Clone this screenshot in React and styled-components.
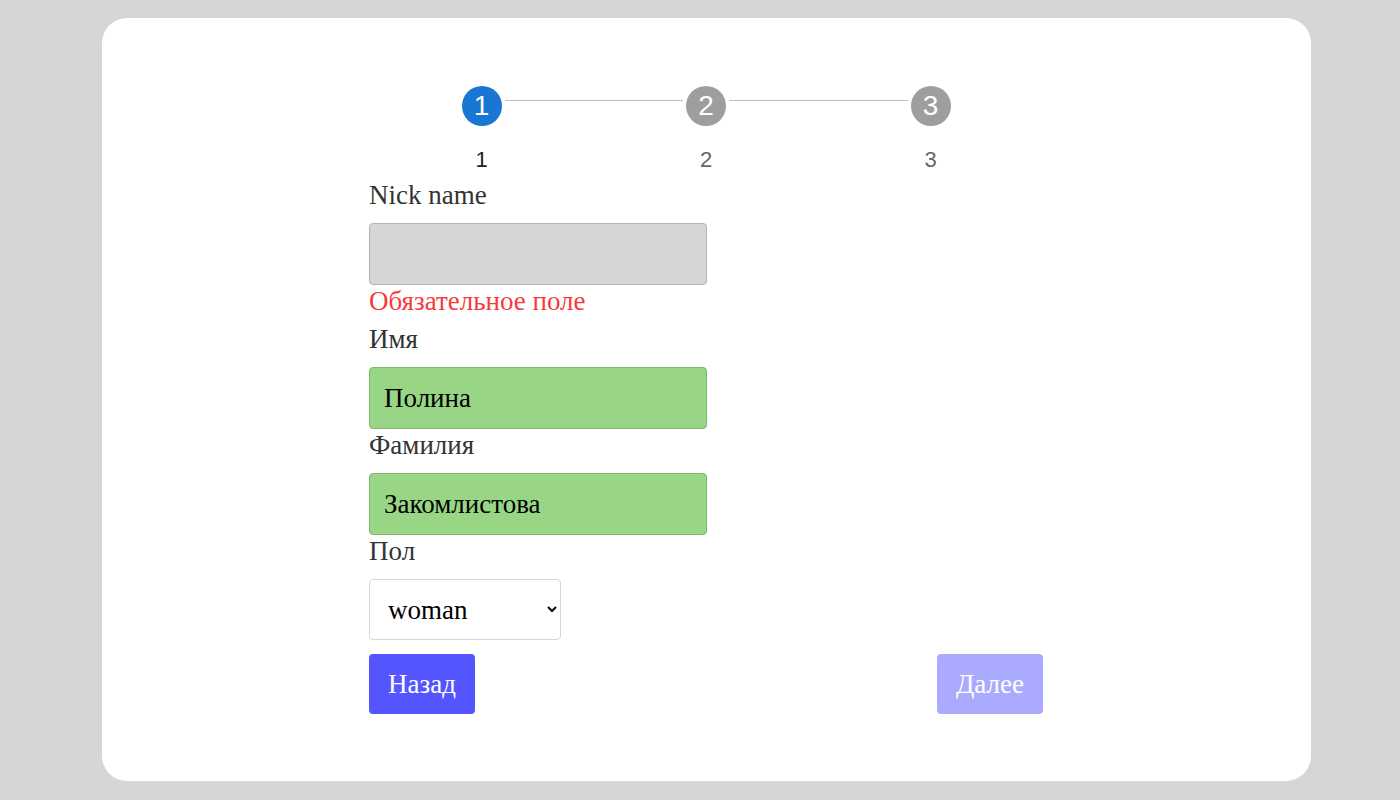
import React, { useState } from 'react';
import styled, { createGlobalStyle } from 'styled-components';

const GlobalStyle = createGlobalStyle`
  html, body {
    margin: 0;
    padding: 0;
    background: #d6d6d6;
  }
  body {
    font-family: "Liberation Serif", "Times New Roman", serif;
  }
`;

const Page = styled.div`
  padding: 18px 89px 19px 102px;
`;

const Card = styled.div`
  background: #fff;
  border-radius: 25px;
  padding: 68px 0 67px;
`;

const Content = styled.div`
  width: 674px;
  margin-left: 267px;
  display: flex;
  flex-direction: column;
`;

const Stepper = styled.div`
  align-self: center;
  display: grid;
  grid-template-columns: 40px 1fr 40px 1fr 40px;
  width: 489px;
  row-gap: 21px;
  margin-bottom: 7px;
  font-family: "Liberation Sans", Arial, sans-serif;
`;

const StepCircle = styled.div`
  width: 40px;
  height: 40px;
  border-radius: 50%;
  background: ${({ $active }) => ($active ? '#1976d2' : '#9e9e9e')};
  color: #fff;
  font-size: 28px;
  display: flex;
  align-items: center;
  justify-content: center;
`;

const Connector = styled.div`
  align-self: start;
  margin: 14px 3px 0;
  border-top: 1px solid #bdbdbd;
`;

const StepLabel = styled.div`
  justify-self: center;
  font-size: 22px;
  line-height: 25px;
  color: ${({ $active }) => ($active ? '#1f1f1f' : '#666')};
  grid-column: ${({ $col }) => $col};
`;

const Label = styled.label`
  display: block;
  font-size: 27px;
  line-height: 31px;
  color: #333;
  margin: 1px 0 12px;
`;

const Input = styled.input`
  box-sizing: border-box;
  width: 338px;
  height: 62px;
  padding: 0 14px;
  border-radius: 4px;
  border: 1px solid ${({ $valid }) => ($valid ? '#7db66d' : '#b3b3b3')};
  background: ${({ $valid }) => ($valid ? '#98d686' : '#d6d6d6')};
  font-family: inherit;
  font-size: 27px;
  color: #000;
  outline: none;
`;

const Error = styled.div`
  font-size: 27px;
  line-height: 31px;
  color: #f53b3b;
  margin: 1px 0 6px;
`;

const Select = styled.select`
  box-sizing: border-box;
  width: 192px;
  height: 61px;
  padding: 0 15px 0 14px;
  border-radius: 4px;
  border: 1px solid #d6d6d6;
  background: #fff;
  font-family: inherit;
  font-size: 27px;
  color: #000;
  outline: none;
`;

const Buttons = styled.div`
  display: flex;
  justify-content: space-between;
  margin-top: 14px;
`;

const Button = styled.button`
  height: 60px;
  padding: 0 19px;
  border: none;
  border-radius: 4px;
  background: ${({ disabled }) => (disabled ? '#aaaaff' : '#5555ff')};
  color: #fff;
  font-family: inherit;
  font-size: 27px;
  cursor: ${({ disabled }) => (disabled ? 'default' : 'pointer')};
`;

const steps = [1, 2, 3];

export default function App() {
  const [current] = useState(1);
  const [form, setForm] = useState({
    nick: '',
    name: 'Полина',
    surname: 'Закомлистова',
    gender: 'woman',
  });

  const update = (key) => (e) => setForm({ ...form, [key]: e.target.value });

  return (
    <>
      <GlobalStyle />
      <Page>
        <Card>
          <Content>
            <Stepper>
              {steps.map((s, i) => (
                <React.Fragment key={s}>
                  {i > 0 && <Connector />}
                  <StepCircle $active={s === current}>{s}</StepCircle>
                </React.Fragment>
              ))}
              {steps.map((s, i) => (
                <StepLabel key={s} $active={s === current} $col={i * 2 + 1}>
                  {s}
                </StepLabel>
              ))}
            </Stepper>

            <Label>Nick name</Label>
            <Input value={form.nick} onChange={update('nick')} />
            <Error>Обязательное поле</Error>

            <Label>Имя</Label>
            <Input $valid value={form.name} onChange={update('name')} />

            <Label>Фамилия</Label>
            <Input $valid value={form.surname} onChange={update('surname')} />

            <Label>Пол</Label>
            <Select value={form.gender} onChange={update('gender')}>
              <option value="man">man</option>
              <option value="woman">woman</option>
            </Select>

            <Buttons>
              <Button>Назад</Button>
              <Button disabled>Далее</Button>
            </Buttons>
          </Content>
        </Card>
      </Page>
    </>
  );
}
